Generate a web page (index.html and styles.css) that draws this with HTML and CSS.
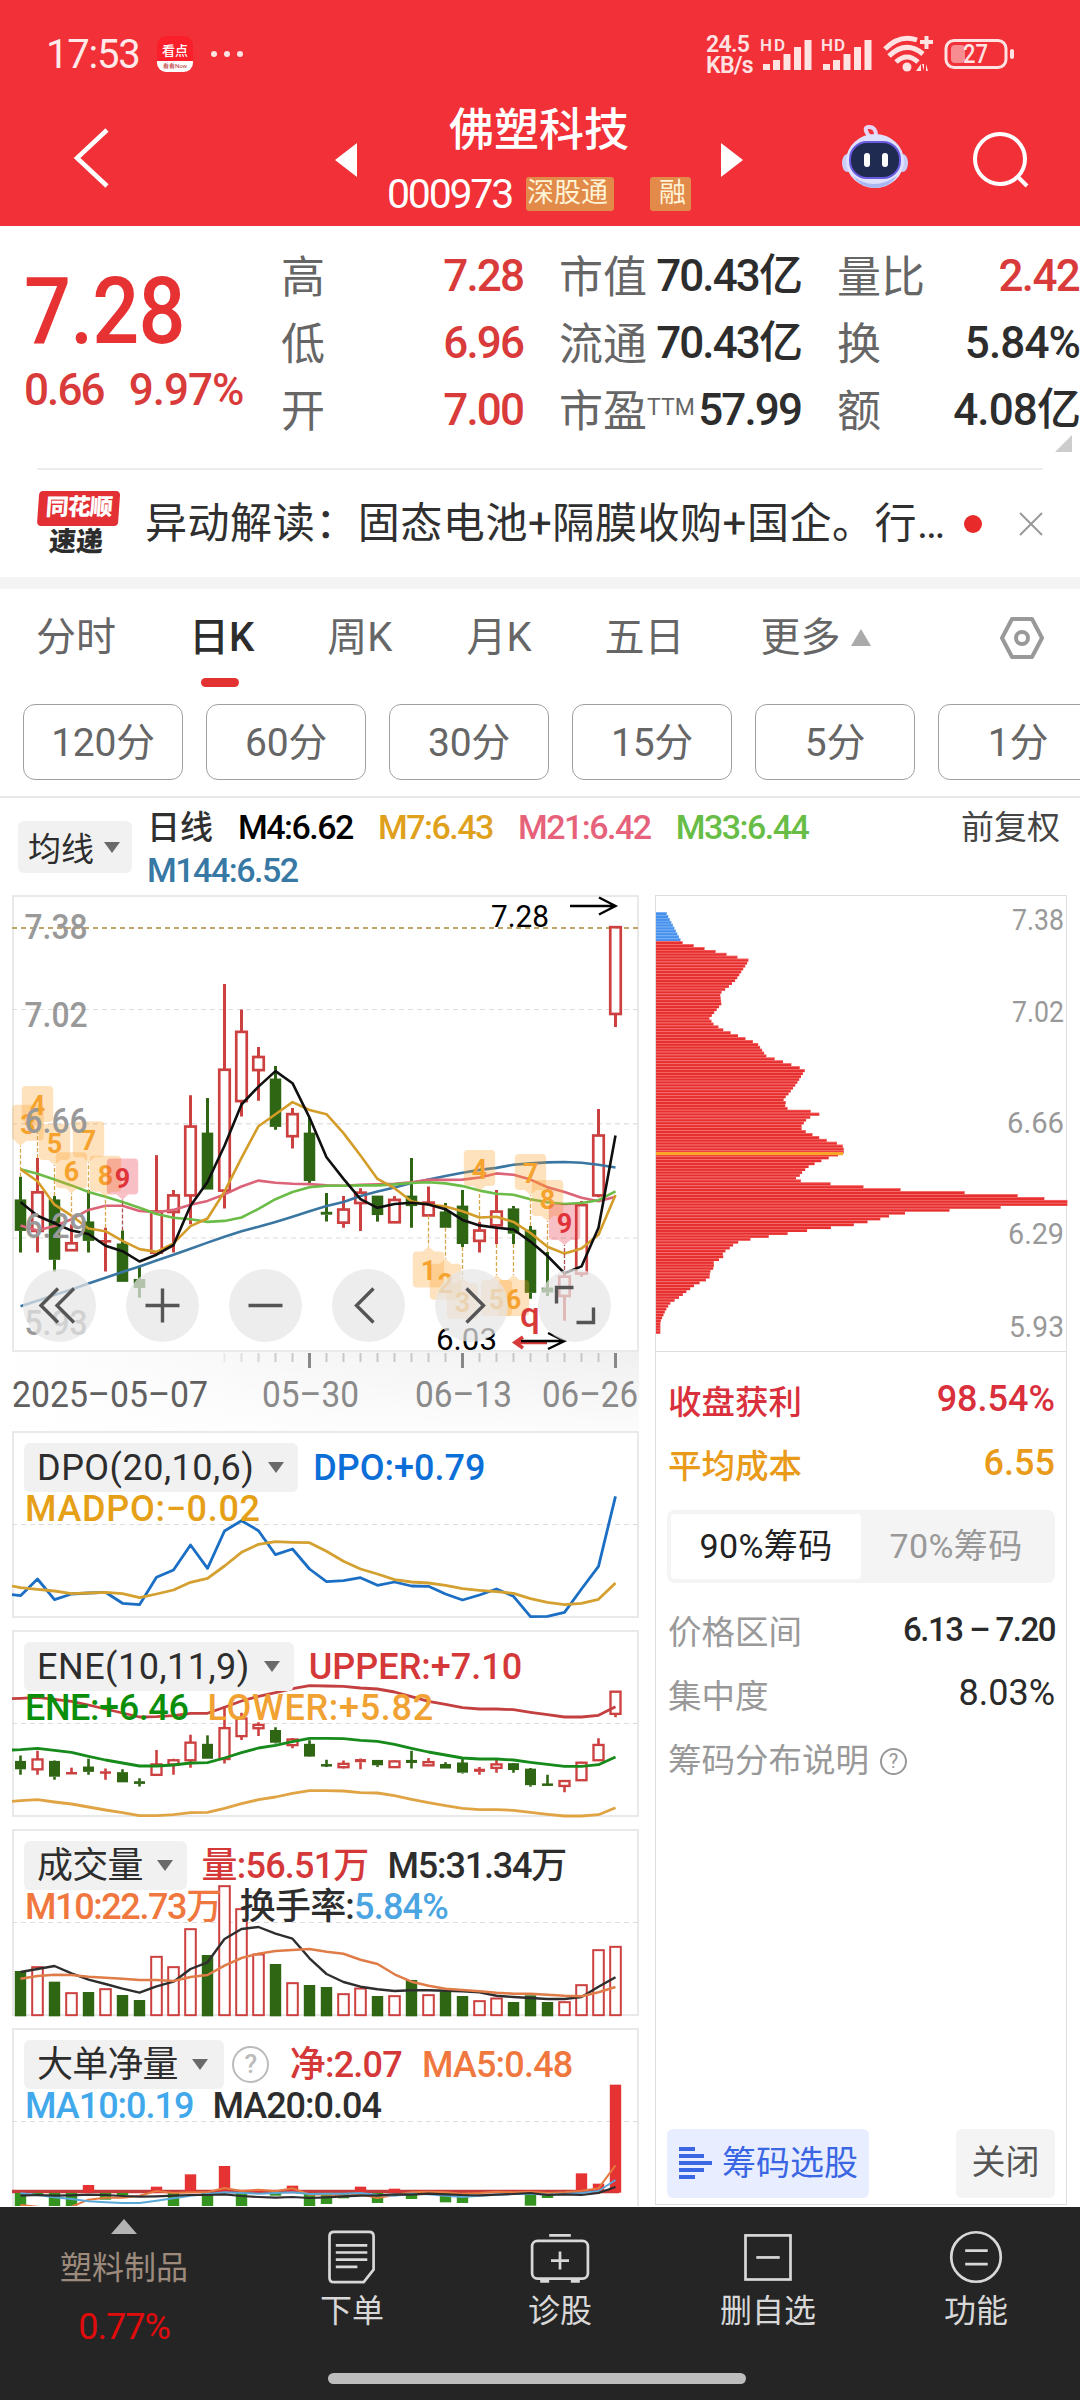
FILE: index.html
```html
<!DOCTYPE html>
<html lang="zh-CN">
<head>
<meta charset="utf-8">
<title>佛塑科技 000973</title>
<link rel="stylesheet" href="styles.css">
</head>
<body>
<div class="screen">
  <header class="top">
    <div class="status">
      <span class="clock">17:53</span>
      <span class="app"><b>看点</b><i>看看Now</i></span>
      <span class="dots"><i></i><i></i><i></i></span>
      <span class="speed">24.5<br>KB/s</span>
      <svg class="sys" viewBox="756 30 264 48" width="264" height="48">
        <g fill="#ffe3e3">
          <text x="760" y="51" font-size="17" font-weight="600" textLength="25">HD</text>
          <path d="M763 64h7v6h-7zM773 60h7v10h-7zM783.500 54h7v16h-7zM794 47h7v23h-7zM804.500 40h7v30h-7z"/>
          <text x="821" y="51" font-size="17" font-weight="600" textLength="24">HD</text>
          <path d="M823 64h7v6h-7zM833 60h7v10h-7zM843.500 54h7v16h-7zM854 47h7v23h-7zM864.500 40h7v30h-7z"/>
          <circle cx="907" cy="67" r="4.500"/>
          <path d="M916 71l5-7v7zM922 64h2v7zM926 64v7h2z"/>
        </g>
        <g fill="none" stroke="#ffe3e3" stroke-width="5">
          <path d="M885 49Q900 34 917 40"/><path d="M889 56Q906 40 923 54"/><path d="M896 62Q907 52 918 62"/>
          <path d="M920 42h13M926.500 36v13" stroke-width="4"/>
        </g>
        <rect x="946" y="40.500" width="60" height="27" rx="8" fill="none" stroke="#ffe3e3" stroke-width="3"/>
        <rect x="951" y="45" width="14" height="18" rx="4" fill="#f78d90"/>
        <rect x="1010" y="49" width="4" height="10" rx="2" fill="#ffe3e3"/>
        <text x="963" y="63" font-size="25" font-weight="500" fill="#ffe3e3" textLength="25" lengthAdjust="spacingAndGlyphs">27</text>
      </svg>
    </div>
    <div class="titlebar">
      <svg class="back" width="40" height="64" viewBox="0 0 40 64" fill="none" stroke="#fff" stroke-width="4.500"><path d="M36 4L6 32l30 28"/></svg>
      <svg class="prev" width="24" height="36" viewBox="0 0 24 36"><path d="M23 1v34L1 18z" fill="#fff"/></svg>
      <div class="name">
        <h1>佛塑科技</h1>
        <div class="code"><span>000973</span><em>深股通</em><em class="rong">融</em></div>
      </div>
      <svg class="next" width="24" height="36" viewBox="0 0 24 36"><path d="M1 1v34l22-17z" fill="#fff"/></svg>
      <svg class="robot" width="68" height="66" viewBox="0 0 68 66">
        <path d="M28 12Q22 4 27 3q9-1 8 12" fill="none" stroke="#e6d5f5" stroke-width="4" stroke-linecap="round"/>
        <ellipse cx="6" cy="39" rx="5" ry="9" fill="#c9cdf8"/><ellipse cx="62" cy="39" rx="5" ry="9" fill="#c9cdf8"/>
        <ellipse cx="34" cy="37" rx="29" ry="27" fill="#dfe0fb"/><path d="M12 52q20 16 44 0q-8 12-22 12t-22-12" fill="#a9b8f3"/>
        <rect x="9" y="18" width="50" height="36" rx="17" fill="#202b52" stroke="#6a5ae0" stroke-width="2"/>
        <rect x="23" y="29" width="6" height="14" rx="3" fill="#fff"/><rect x="41" y="29" width="6" height="14" rx="3" fill="#fff"/>
      </svg>
      <svg class="search" width="60" height="60" viewBox="0 0 60 60" fill="none" stroke="#fff" stroke-width="4"><circle cx="28" cy="29" r="25"/><path d="M45 46l10 10"/></svg>
    </div>
  </header>

  <section class="quote">
    <div class="price"><strong>7.28</strong><div class="chg"><span>0.66</span><span class="pct">9.97%</span></div></div>
    <dl class="c1"><div><dt>高</dt><dd class="up">7.28</dd></div><div><dt>低</dt><dd class="up">6.96</dd></div><div><dt>开</dt><dd class="up">7.00</dd></div></dl>
    <dl class="c2"><div><dt>市值</dt><dd>70.43亿</dd></div><div><dt>流通</dt><dd>70.43亿</dd></div><div><dt>市盈<sup>TTM</sup></dt><dd>57.99</dd></div></dl>
    <dl class="c3"><div><dt>量比</dt><dd class="up">2.42</dd></div><div><dt>换</dt><dd>5.84%</dd></div><div><dt>额</dt><dd>4.08亿</dd></div></dl>
    <i class="corner"></i>
  </section>

  <section class="news">
    <div class="brand"><b>同花顺</b><i>速递</i></div>
    <p>异动解读：固态电池+隔膜收购+国企。行…</p>
    <i class="dot"></i>
    <svg width="24" height="24" viewBox="0 0 24 24" stroke="#999" stroke-width="2"><path d="M1 1l22 22M23 1L1 23"/></svg>
  </section>

  <nav class="tabs">
    <span>分时</span><span class="on">日K</span><span>周K</span><span>月K</span><span>五日</span><span>更多<i></i></span>
    <svg width="46" height="46" viewBox="0 0 46 46" fill="none" stroke="#999" stroke-width="4" stroke-linejoin="round"><path d="M13 4h20l10 19-10 19H13L3 23z"/><circle cx="23" cy="23" r="6"/></svg>
  </nav>
  <div class="periods"><span>120分</span><span>60分</span><span>30分</span><span>15分</span><span>5分</span><span>1分</span></div>

  <div class="legend">
    <span class="chip">均线<i></i></span>
    <div class="mas"><b>日线</b><span class="k">M4:6.62</span><span class="y">M7:6.43</span><span class="p">M21:6.42</span><span class="g">M33:6.44</span><span class="b">M144:6.52</span></div>
    <span class="adj">前复权</span>
  </div>

  <main class="board">
    <div class="left">
      <svg class="kline" id="kline" width="627" height="457" viewBox="12 895 627 457"></svg>
      <svg class="axis" id="axis" width="639" height="79" viewBox="0 1352 639 79"></svg>
      <div class="panel">
        <svg id="dpo" width="627" height="187" viewBox="12 1432 627 187"></svg>
        <div class="row"><span class="chip en">DPO(20,10,6)<i></i></span><span class="blue wide">DPO:+0.79</span></div>
        <div class="row two"><span class="amber wider">MADPO:−0.02</span></div>
      </div>
      <div class="panel">
        <svg id="ene" width="627" height="187" viewBox="12 1631 627 187"></svg>
        <div class="row"><span class="chip en">ENE(10,11,9)<i></i></span><span class="red wide">UPPER:+7.10</span></div>
        <div class="row two"><span class="green ene">ENE:+6.46</span><span class="orange wider">LOWER:+5.82</span></div>
      </div>
      <div class="panel">
        <svg id="vol" width="627" height="187" viewBox="12 1830 627 187"></svg>
        <div class="row vol"><span class="chip">成交量<i></i></span><span class="red">量:56.51万</span><span class="dark v2">M5:31.34万</span></div>
        <div class="row two"><span class="coral m10">M10:22.73万</span><span class="dark">换手率:<span class="sky">5.84%</span></span></div>
      </div>
      <div class="panel last">
        <svg id="net" width="627" height="178" viewBox="12 2029 627 178"></svg>
        <div class="row net"><span class="chip">大单净量<i></i></span><span class="help">?</span><span class="red">净:2.07</span><span class="coral">MA5:0.48</span></div>
        <div class="row two net2"><span class="sky2">MA10:0.19</span><span class="dark">MA20:0.04</span></div>
      </div>
    </div>
    <aside class="right">
      <svg id="chips" width="410" height="455" viewBox="656 896 410 455"></svg>
      <div class="stats">
        <div class="s red"><span>收盘获利</span><b>98.54%</b></div>
        <div class="s avg"><span>平均成本</span><b>6.55</b></div>
        <div class="seg"><span class="on">90%筹码</span><span>70%筹码</span></div>
        <div class="s gray"><span>价格区间</span><b class="din">6.13 – 7.20</b></div>
        <div class="s gray"><span>集中度</span><b>8.03%</b></div>
        <div class="s gray"><span>筹码分布说明<i class="q">?</i></span></div>
      </div>
      <div class="acts">
        <span class="pick"><svg width="33" height="33" viewBox="0 0 33 33" stroke="#3b66e3" stroke-width="4"><path d="M0 2h16M0 9h25M0 16h33M0 23h25M0 30h16"/></svg>筹码选股</span>
        <span class="close">关闭</span>
      </div>
    </aside>
  </main>

  <footer class="nav">
    <div class="sector"><i></i><span>塑料制品</span><b>0.77%</b></div>
    <div class="item"><svg width="60" height="60" viewBox="0 0 60 60"><path d="M10 2h39q5 0 5 5v37L43 58H10q-5 0-5-5V7q0-5 5-5z"/><path d="M12 17h35M12 25h35M12 33h35M12 41h24"/></svg>下单</div>
    <div class="item"><svg width="60" height="60" viewBox="0 0 60 60"><rect x="-1" y="12" width="62" height="42" rx="6"/><path d="M18 6h24M30 24v20M20 34h20M8 57h10M42 57h10"/></svg>诊股</div>
    <div class="item"><svg width="60" height="60" viewBox="0 0 60 60"><rect x="5" y="6" width="50" height="49"/><path d="M17 30.500h26"/></svg>删自选</div>
    <div class="item"><svg width="60" height="60" viewBox="0 0 60 60"><circle cx="30" cy="30" r="27.500"/><path d="M18 23h25M18 38h25"/></svg>功能</div>
    <i class="home"></i>
  </footer>
</div>
<script src="charts.js"></script>
</body>
</html>
```
FILE: styles.css
```css
* { box-sizing: border-box; margin: 0; padding: 0; }
body { width: 1080px; background: #fff; font-family: Roboto, "Noto Sans CJK SC", sans-serif; color: #303030; }
i, em { font-style: normal; }
svg { display: block; flex: none; overflow: visible; }
svg text { font-family: Roboto, "Noto Sans CJK SC", sans-serif; }
.screen { width: 1080px; height: 2400px; overflow: hidden; display: flex; flex-direction: column; }
.screen > * { flex: none; }

/* header */
.top { height: 226px; background: #f13038; color: #fff; }
.status { height: 94px; padding: 30px 60px 0 46px; display: flex; align-items: flex-start; }
.clock { width: 111px; font-size: 40px; line-height: 49px; letter-spacing: -1.200px; color: #ffe9e9; }
.app { width: 36px; height: 36px; margin-top: 6px; border-radius: 9px; background: #fb1f2b; overflow: hidden; text-align: center; }
.app b { display: block; height: 25px; font-size: 13px; line-height: 30px; font-weight: 500; }
.app i { display: block; height: 11px; background: #fff; color: #b33; font-size: 6px; line-height: 10px; }
.dots { display: flex; gap: 7px; margin: 21px 0 0 18px; flex: 1; }
.dots i { width: 6px; height: 6px; border-radius: 3px; background: #ffe3e3; }
.speed { width: 50px; margin-top: 5px; font-size: 23px; line-height: 20.500px; font-weight: 600; letter-spacing: -.7px; color: #ffe3e3; }
.titlebar { height: 132px; display: flex; padding-left: 71px; }
.back { margin-top: 32px; }
.prev { margin: 48px 0 0 223px; }
.name { width: 362px; display: flex; flex-direction: column; align-items: center; }
h1 { margin-top: 7px; font-size: 45px; line-height: 60px; font-weight: 500; }
.code { display: flex; align-items: center; height: 36px; margin-top: 15px; font-size: 27px; color: #fff3d6; }
.code span { color: #fff; font-size: 41px; letter-spacing: -2.200px; margin-right: 14px; }
.code em { width: 88px; height: 34px; padding-left: 1px; line-height: 33px; border-radius: 3px; background: #e28a4a; }
.code .rong { width: 41px; margin-left: 36px; padding-left: 9px; white-space: nowrap; }
.next { margin: 48px 0 0; }
.robot { margin: 30px 0 0 97px; }
.search { margin: 36px 0 0 63px; }

/* quote */
.quote { position: relative; height: 242px; display: grid; grid-template-columns: 281px 242px 36px 242px 36px 243px; }
.price { padding: 32px 0 0 24px; color: #e63232; }
.price strong { display: block; font-size: 93px; line-height: 108px; font-weight: 500; letter-spacing: -1px; transform: scaleX(.89); transform-origin: 0 0; }
.chg { display: flex; gap: 25px; font-size: 44px; line-height: 48px; letter-spacing: -1.900px; color: #d93a3a; font-weight: 500; }
.pct { letter-spacing: -1px; }
dl { padding-top: 17px; }
.c2 { grid-column: 4; } .c3 { grid-column: 6; }
dl div { height: 67px; display: flex; justify-content: space-between; align-items: center; white-space: nowrap; }
dt { font-size: 44px; line-height: 67px; color: #666; padding-top: 3px; }
dd { font-size: 44px; line-height: 67px; letter-spacing: -1.900px; font-weight: 500; color: #2d2d2d; }
dd.up { color: #d93a3a; }
.c3 dd { letter-spacing: -.9px; }
.c3 .up { letter-spacing: -1.700px; padding-right: 1px; }
sup { font-size: 23px; line-height: 0; vertical-align: 12px; }
.corner { position: absolute; right: 8px; top: 209px; border: solid transparent; border-width: 0 0 17px 17px; border-bottom-color: #ccc; }

/* news */
.news { height: 109px; margin: 0 37px; border-top: 2px solid #ececec; display: flex; align-items: center; }
.brand { width: 81px; height: 66px; margin-right: 27px; text-align: center; transform: skewX(-4deg); }
.brand b { display: block; height: 35px; border-radius: 4px; background: #e33035; color: #fff; font-size: 23px; line-height: 34px; font-weight: 900; letter-spacing: -1px; }
.brand i { display: block; font-size: 27px; line-height: 33px; font-weight: 900; color: #2d2d2d; }
.news p { width: 807px; font-size: 42px; line-height: 60px; letter-spacing: .55px; white-space: nowrap; }
.dot { width: 18px; height: 18px; border-radius: 9px; background: #e82a2a; margin: 0 37px 0 12px; }

/* tabs */
.tabs { height: 127px; border-top: 12px solid #f4f4f4; display: flex; padding: 19px 35px 0 36px; font-size: 40px; line-height: 60px; color: #666; }
.tabs span { height: 83px; margin-right: 73px; }
.tabs span:nth-child(2) { margin-right: 73px; }
.tabs span:nth-child(3) { margin-right: 74px; }
.tabs span:nth-child(4) { margin-right: 73px; }
.tabs span:nth-child(5) { margin-right: 76px; }
.tabs .on { color: #2d2d2d; font-weight: 500; position: relative; }
.tabs .on::after { content: ""; position: absolute; left: 12px; top: 70px; width: 38px; height: 9px; border-radius: 5px; background: #e33232; }
.tabs span:nth-child(6) { display: flex; margin-right: auto; }
.tabs span i { height: 0; margin: 21px 0 0 10px; border: solid transparent; border-width: 0 10px 17px; border-bottom-color: #aaa; }
.tabs svg { margin: 7px 0 0; }
.periods { height: 94px; border-bottom: 2px solid #e8e8e8; padding-left: 23px; display: flex; gap: 23px; overflow: hidden; }
.periods span { flex: none; width: 160px; height: 76px; padding-top: 2px; border: 1.500px solid #a0a0a0; border-radius: 12px; font-size: 39px; line-height: 73px; text-align: center; color: #666; letter-spacing: -.3px; }

/* moving-average legend */
.legend { height: 97px; display: flex; align-items: flex-start; padding: 0 20px 0 18px; }
.chip { display: inline-flex; align-items: center; background: #f1f1f1; border-radius: 6px; color: #2d2d2d; white-space: nowrap; }
.chip i { border: solid transparent; border-width: 11px 8.500px 0; border-top-color: #6a6a6a; }
.legend .chip { width: 114px; height: 52px; margin-top: 23px; padding-left: 10px; font-size: 33px; gap: 10px; }
.mas { width: 700px; margin: 8px 0 0 15px; display: flex; flex-wrap: wrap; column-gap: 25px; font-size: 34px; line-height: 43px; letter-spacing: -1.500px; font-weight: 500; }
.mas b { font-size: 33px; font-weight: 500; letter-spacing: 0; }
.k { color: #000; } .y { color: #dfa01c; } .p { color: #e6627a; } .g { color: #67bd45; } .b { color: #3878a4; }
.adj { margin: 8px 0 0 auto; font-size: 33px; line-height: 43px; color: #444; }

/* charts */
.board { height: 1312px; display: flex; gap: 16px; }
.left { width: 639px; display: flex; flex-direction: column; }
.kline { margin-left: 12px; }
.panel { position: relative; height: 187px; margin: 0 0 12px 12px; padding: 12px 0 0 12px; }
.panel > svg { position: absolute; left: 0; top: 0; }
.last { height: 178px; margin-bottom: 0; }
.last > svg { overflow: hidden; }
.row { position: relative; display: flex; align-items: center; height: 49px; font-size: 36px; line-height: 40px; letter-spacing: -.8px; font-weight: 500; white-space: nowrap; gap: 15px; }
.row .chip { height: 49px; padding: 0 14px 0 13px; gap: 14px; font-weight: 400; }
.row .en { letter-spacing: .5px; }
.row.two { height: 40px; padding: 0 0 6px 1px; gap: 19px; }
.wide { letter-spacing: 0; }
.wider { letter-spacing: .7px; }
.ene { letter-spacing: -.4px; }
.m10 { letter-spacing: -1.400px; }
.vol .v2 { margin-left: 4px; letter-spacing: -1.200px; }
.net .chip { padding-right: 16px; }
.net .red { margin-left: 6px; }
.net .coral { margin-left: 5px; }
.net2 { letter-spacing: -1px; }
.blue { color: #0c6fd8; } .amber { color: #e5a018; } .red { color: #d43838; } .green { color: #0b8f0b; }
.orange { color: #f0a233; } .dark { color: #2d2d2d; } .coral { color: #f0783f; } .sky { color: #4aa5e2; } .sky2 { color: #42a8ec; }
.help { width: 37px; height: 37px; margin-left: -7px; border: 2.500px solid #bbb; border-radius: 50%; text-align: center; line-height: 32px; font-size: 26px; color: #bbb; }

.right { width: 412px; height: 1310px; border: 1px solid #dedede; display: flex; flex-direction: column; }
.stats { border-top: 1px solid #dedede; padding: 15px 11px 0; }
.s { height: 64px; display: flex; justify-content: space-between; align-items: center; padding: 0 0 0 1px; font-size: 33.500px; }
.s b { font-weight: 400; font-size: 36px; color: #2a2a2a; }
.s .din { font-size: 33px; letter-spacing: -1.500px; font-weight: 500; }
.s.red, .s.red b { color: #d9303c; font-weight: 500; }
.s.avg, .s.avg b { color: #e89a18; font-weight: 500; }
.s.gray span { color: #999; }
.seg { height: 73px; margin: 15px 0 14px; padding: 4px; border-radius: 8px; background: #f4f4f4; display: flex; font-size: 34px; line-height: 64px; color: #999; text-align: center; letter-spacing: .4px; }
.seg span { width: 190px; border-radius: 4px; }
.seg .on { background: #fff; color: #222; }
.q { display: inline-block; width: 27px; height: 27px; margin-left: 11px; border: 2px solid #999; border-radius: 50%; font-size: 20px; line-height: 23px; text-align: center; vertical-align: 4px; }
.acts { margin-top: auto; padding: 0 11px 6px; display: flex; justify-content: space-between; font-size: 34px; line-height: 67px; }
.pick { width: 202px; height: 69px; display: flex; align-items: center; gap: 10px; padding-left: 12px; border-radius: 6px; background: #e8eeff; color: #3b66e3; white-space: nowrap; }
.close { width: 99px; border-radius: 6px; background: #f4f4f4; text-align: center; color: #555; }

/* bottom bar */
.nav { position: relative; height: 193px; background: #252525; display: flex; color: #d8d8d8; font-size: 32px; line-height: 48px; padding-left: 20px; }
.sector { width: 208px; display: flex; flex-direction: column; align-items: center; color: #9c8b7d; }
.sector i { margin: 12px 0 10px; border: solid transparent; border-width: 0 13px 15px; border-bottom-color: #b4b4b4; }
.sector b { margin-top: 11px; font-weight: 400; font-size: 36px; letter-spacing: -1px; color: #e00c0c; }
.item { width: 208px; display: flex; flex-direction: column; align-items: center; padding-top: 20px; }
.item:nth-child(2) { margin-left: 20px; }
.item svg { fill: none; stroke: #d8d8d8; stroke-width: 3; transform: scale(.9); }
.home { position: absolute; left: 328px; top: 166px; width: 418px; height: 11px; border-radius: 6px; background: #bdbdbd; }
```
FILE: charts.js
```js
const RED = '#cc4040', GREEN = '#2f6614';
const X = i => 20.5 + 17 * i;
const el = id => document.getElementById(id);
const line = (ys, f, color, w = 2.6, start) =>
  `<polyline fill="none" stroke="${color}" stroke-width="${w}" stroke-linejoin="round" points="${start === undefined ? '' : '12,' + f(start) + ' '}${ys.map((v, i) => X(i) + ',' + f(v).toFixed(1)).join(' ')}"/>`;
const dash = (y, c = '#dcdcdc', w = 1, x2 = 639) =>
  `<path d="M12 ${y}H${x2}" stroke="${c}" stroke-width="${w}" stroke-dasharray="5 4"/>`;
const frame = (y, h) => `<rect x="13" y="${y + 1}" width="625" height="${h - 2}" fill="none" stroke="#e9e9e9" stroke-width="2"/>`;
const text = (x, y, s, size, w, color, extra = '') =>
  `<text x="${x}" y="${y}" font-size="${size}" fill="${color}" textLength="${w}" lengthAdjust="spacingAndGlyphs" ${extra}>${s}</text>`;

// direction (1 up, 0 down), high, body top, body bottom, low
const K = [[0,862,929,1019,1082],[1,807,907,1019,1082],[0,918,929,1103,1137],[1,1000,1055,1075,1075],[0,900,993,1048,1082],[1,1010,1047,1050,1137],
[0,1018,1057,1167,1167],[0,1120,1160,1185,1213],[1,799,963,1082,1082],[1,900,916,964,1082],[1,625,716,916,1000],[0,633,735,899,899],
[1,302,551,902,954],[1,376,441,642,687],[1,485,514,552,641],[0,540,578,717,725],[1,662,680,744,780],[0,690,735,874,880],
[0,909,965,972,992],[1,918,957,995,1010],[1,895,908,938,1019],[0,918,918,973,992],[1,918,929,994,994],[0,807,918,947,1010],
[1,890,937,974,974],[0,938,964,1010,1010],[0,900,947,1057,1066],[1,993,1018,1048,1082],[1,900,963,1003,1057],[0,947,955,1027,1057],
[0,1005,1017,1199,1216],[0,1080,1185,1198,1208],[1,1140,1152,1208,1280],[1,932,944,1143,1152],[1,665,742,916,921],[1,137,137,389,427]];
const candles = (f, w, sw) => K.map(([up, h, t, b, l], i) => {
  const x = X(i), T = f(t), B = f(b), c = up ? RED : GREEN;
  let s = `<path d="M${x} ${f(h)}V${T}M${x} ${B}V${f(l)}" stroke="${c}" stroke-width="${sw}"/>`;
  if (up && B - T > 3) s += `<rect x="${x - w / 2 + .5}" y="${T}" width="${w - 1}" height="${B - T}" fill="#fff" fill-opacity=".6" stroke="${c}" stroke-width="${sw * .9}"/>`;
  else s += `<rect x="${x - w / 2}" y="${T - .5}" width="${w}" height="${Math.max(B - T + .5, 2.5)}" fill="${c}"/>`;
  return s;
}).join('');

// price chart
const Y = v => 880 + v / 2.904;
const M4 = [935,975,997,1018,1028,1062,1078,1108,1088,1060,946,877,772,652,600,555,590,690,805,868,927,952,941,937,942,956,987,1003,1010,1015,1050,1092,1142,1122,1010,742];
const M7 = [840,875,943,975,1012,1020,1048,1072,1080,1055,1005,983,905,807,715,680,645,668,680,735,800,868,895,933,943,948,962,980,978,993,1025,1065,1085,1070,1030,915];
const M21 = [1003,1018,1005,985,958,946,946,961,965,958,943,932,913,890,873,879,882,883,887,888,885,884,882,878,871,871,870,864,852,856,870,892,906,923,933,920];
const M33 = [840,853,870,887,906,920,935,952,970,981,985,993,990,980,955,927,906,892,888,888,887,887,884,880,878,881,889,902,911,914,927,936,941,938,930,904];
const M144 = [1238,1222,1205,1189,1172,1155,1138,1122,1105,1088,1071,1053,1036,1020,1007,993,978,962,947,935,918,905,893,880,870,860,850,842,836,827,823,820,819,821,827,835];
// index, digit, anchor value, below the candle?, horizontal shift
const tags = [[0,3,862,0,7.5],[1,4,807,0],[2,5,918,0],[3,6,1000,0],[4,7,910,0],[5,8,1010,0],[6,9,1018,0],[24,1,974,1],[25,2,1010,1],[26,3,1066,1],
[28,5,1057,1],[29,6,1057,1],[27,4,993,0],[30,7,1005,0],[31,8,1080,0],[32,9,1150,0]];
const tag = ([i, n, v, below, dx = 0]) => {
  const x = X(i), cx = x + dx, hot = n === 9, s = below ? 1 : -1, tip = Y(v) + s * 31, y = below ? tip + 5 : tip - 41;
  return `<path d="M${x} ${Y(v)}V${tip}" stroke="${hot ? '#b05050' : '#d8a850'}" stroke-width="1.3" stroke-dasharray="4 2"/>
  <g fill="${hot ? '#e8303c' : '#fda028'}" ><rect x="${cx - 15.7}" y="${y}" width="31.400" height="36" rx="4" fill-opacity=".3"/>
  <path d="M${x - 6} ${tip + s * 5}h12L${x} ${tip}z" fill-opacity=".3"/></g>
  <text x="${cx}" y="${y + 29}" text-anchor="middle" font-size="27" font-weight="700" fill="${hot ? '#e03238' : '#f6a22e'}">${n}</text>`;
};
const icons = ['M49 0l-17 17 17 17M65 0l-17 17 17 17', 'M0 17h34M17 0v34', 'M0 17h34', 'M26 0L9 17l17 17', 'M8 0l17 17L8 34', 'M-1 15V-1h17M36 19v15H19'];
const offs = [-50.5, -17, -17, -21, -13, -17];
el('kline').innerHTML = frame(895, 457) + dash(928, '#c0a46c', 2) + dash(1009.5) + dash(1123.8, '#e2e2e2', 1.5) + dash(1238) +
  candles(Y, 11.5, 3) +
  line(M144, Y, '#3a76a2') + line(M21, Y, '#dc6478') + line(M33, Y, '#6cbc48') + line(M7, Y, '#d49c28') + line(M4, Y, '#101010') +
  tags.map(tag).join('') +
  [['7.38', 938.5], ['7.02', 1026.5], ['6.66', 1132.5], ['6.29', 1237.5], ['5.93', 1334.5]].map(([s, y]) => text(24.5, y, s, 35, 63, '#999', 'font-weight="500"')).join('') +
  text(491, 926.5, '7.28', 32, 58, '#000') + '<path d="M570 906h45M599 897.500l16.500 8.500-16.500 8.500" fill="none" stroke="#000" stroke-width="2.400"/>' +
  text(436, 1349.5, '6.03', 32, 61, '#000') +
  '<path d="M547 1342.500h-32M523 1337l-8 5.500 8 5.500" fill="none" stroke="#d83a3a" stroke-width="3.500"/><path d="M521 1341h43M548 1333l16.500 8-16.500 8" fill="none" stroke="#000" stroke-width="2.400"/>' +
  '<text x="520" y="1327" font-size="35" fill="#d83a3a" font-weight="500">q</text>' +
  icons.map((d, i) => { const cx = 59.5 + 103 * i; return `<circle cx="${cx}" cy="1305.500" r="36.500" fill="#e6e6e6" fill-opacity=".72"/><path transform="translate(${cx + offs[i]} 1288.500)" d="${d}" fill="none" stroke="#555" stroke-width="3.400"/>`; }).join('');

// date axis
let ticks = '';
for (let i = 12; i < 36; i++) {
  const big = i === 17 || i === 26 || i === 35;
  ticks += `<path d="M${X(i)} 1353v${big ? 15 : 9}" stroke="${big ? '#888' : '#c8c8c8'}" stroke-width="${big ? 3 : 2}" opacity="${Math.min(1, .3 + (i - 12) * .2)}"/>`;
}
el('axis').innerHTML = '<defs><linearGradient id="gx"><stop offset="0" stop-color="#fff"/><stop offset=".5" stop-color="#f6f6f6"/><stop offset="1" stop-color="#f0f0f0"/></linearGradient><linearGradient id="gy" x2="0" y2="1"><stop offset="0" stop-color="#fff" stop-opacity="0"/><stop offset="1" stop-color="#fff" stop-opacity=".8"/></linearGradient></defs><rect y="1352" width="639" height="79" fill="url(#gx)"/><rect y="1352" width="639" height="79" fill="url(#gy)"/>' + ticks +
  text(12, 1407, '2025–05–07', 36.5, 196, '#606060') + text(262, 1407, '05–30', 36.5, 97, '#8a8a8a') + text(415, 1407, '06–13', 36.5, 97, '#8a8a8a') + text(542, 1407, '06–26', 36.5, 96, '#8a8a8a');

// DPO
const D = v => 1360 + v / 3;
el('dpo').innerHTML = frame(1432, 187) + dash(1525.5) +
  line([710,660,722,705,702,700,733,737,655,633,558,628,516,485,515,587,570,630,668,665,656,679,669,681,682,705,723,708,690,712,773,772,760,690,622,412], D, '#1a6ec4', 2.8, 707) +
  line([686,691,696,704,702,700,704,716,705,693,670,658,621,580,556,548,550,551,577,607,630,645,662,669,672,679,689,694,698,703,719,730,737,733,721,672], D, '#d4a030', 2.8, 681);

// ENE
const E = v => 1620 + v / 3, EK = v => 1692.7 + (v - 137) * .088;
el('ene').innerHTML = frame(1631, 187) + dash(1724.5) + candles(EK, 11, 2.6) +
  line([238,235,241,247,258,270,282,294,293,290,283,283,265,246,232,221,209,200,201,202,207,210,219,233,247,256,266,270,270,272,280,287,294,294,289,263], E, '#c44040', 2.8, 239) +
  line([392,388,394,400,412,423,432,441,441,438,432,431,417,401,387,379,368,358,358,359,364,367,376,388,399,408,417,420,420,423,430,436,442,442,437,414], E, '#178a1c', 2.8, 393) +
  line([545,542,549,555,564,573,581,590,590,587,581,580,568,554,542,534,523,515,515,516,521,522,530,541,551,560,568,572,572,574,580,586,591,591,587,566], E, '#e0a444', 2.8, 547);

// volume
const V = v => 1820 + v / 3;
const vol = [456,443,488,521,519,509,528,543,412,443,329,408,200,269,405,435,491,498,504,524,507,531,530,483,527,517,531,545,537,549,529,549,548,497,392,382];
el('vol').innerHTML = frame(1830, 187) + dash(1923.5) +
  vol.map((v, i) => K[i][0]
    ? `<rect x="${X(i) - 5.3}" y="${V(v) + .5}" width="10.600" height="${V(590) - V(v) - 1}" fill="#fff" stroke="${RED}" stroke-width="2"/>`
    : `<rect x="${X(i) - 5.7}" y="${V(v)}" width="11.400" height="${V(592) - V(v)}" fill="${GREEN}"/>`).join('') +
  line([459,450,441,463,482,495,509,521,502,488,450,430,360,330,324,344,359,418,465,489,503,511,516,514,514,515,517,520,530,534,537,540,540,534,503,475], V, '#2e2e2e', 2.4) +
  line([479,471,467,468,473,476,479,483,483,486,474,468,440,417,404,396,393,390,398,404,422,435,466,488,500,509,513,517,521,524,524,527,530,532,520,504], V, '#e07c48', 2.5);

// large-order net volume
const net = { 0:1180,1:1130,2:1180,3:1180,4:1098,5:1142,6:1128,8:1103,9:1180,10:1066,11:1180,12:1041,13:1180,14:1111,15:1130,16:1100,17:1180,18:1155,19:1138,20:1103,21:1152,22:1109,23:1140,25:1150,26:1152,30:1160,31:1137,33:1063,34:1094,35:797 };
el('net').innerHTML = frame(2029, 220) + dash(2122.5) +
  '<path d="M12 2192.500H619" stroke="#c43c3c" stroke-width="3.500"/>' +
  Object.entries(net).map(([i, v]) => v < 1118
    ? `<rect x="${X(+i) - 5.7}" y="${V(v)}" width="11.400" height="${V(1121) - V(v)}" fill="#e53232"/>`
    : `<rect x="${X(+i) - 5.7}" y="${V(1122)}" width="11.400" height="${V(v) - V(1122)}" fill="#35941f"/>`).join('') +
  line([1158,1163,1170,1163,1142,1136,1136,1130,1116,1122,1120,1120,1107,1116,1112,1117,1108,1127,1126,1130,1126,1137,1128,1120,1118,1120,1124,1122,1118,1120,1118,1122,1120,1115,1108,1039], V, '#e67840', 2) +
  line([1123,1128,1135,1140,1147,1150,1152,1152,1145,1138,1130,1125,1120,1122,1124,1122,1120,1125,1124,1124,1122,1128,1130,1124,1126,1130,1134,1130,1127,1125,1124,1127,1125,1122,1116,1083], V, '#5aa8d8', 2) +
  line([1130,1128,1130,1129,1127,1128,1131,1133,1132,1130,1128,1128,1126,1131,1134,1136,1134,1137,1135,1132,1130,1129,1126,1127,1124,1126,1128,1129,1127,1125,1122,1128,1126,1128,1122,1104], V, '#2e2e2e', 2.2);

// cost distribution: outline points, interpolated row by row
const P = [[97,78],[183,123],[188,127],[241,327],[300,287],[318,268],[340,240],[372,244],[415,208],[432,220],[450,250],[490,352],[528,378],[535,398],[569,496],[610,470],[640,447],[658,430],[672,440],[682,430],[690,461],[696,538],[703,538],[708,516],[718,500],[742,481],[752,490],[780,555],[787,585],[800,611],[820,611],[830,575],[847,532],[860,505],[875,488],[890,476],[899,460],[907,502],[916,628],[924,700],[933,836],[942,1078],[951,1180],[960,1245],[964,1282],[974,1282],[978,1145],[987,992],[995,844],[1003,750],[1013,744],[1021,693],[1030,671],[1039,605],[1047,536],[1055,474],[1064,420],[1073,358],[1082,306],[1090,285],[1105,268],[1118,248],[1134,250],[1142,228],[1150,218],[1160,224],[1175,210],[1195,208],[1205,186],[1215,165],[1230,145],[1250,120],[1270,90],[1290,77],[1325,61],[1366,61]];
let rows = '';
const step = 8.72;
for (let n = 0; 101 + n * step < 1363; n++) {
  const y = 101 + n * step, k = P.findIndex(p => p[0] > y), [y0, a] = P[k - 1], [y1, b] = P[k];
  const w = (a + (b - a) * (y - y0) / (y1 - y0) - 48) / 3, top = 880 + (y - step / 2) / 3, blue = y < 184;
  rows += `<rect x="656" y="${top.toFixed(2)}" width="${w.toFixed(1)}" height="2.95" fill="${blue ? '#4791ec' : '#e63030'}"/><rect x="656" y="${top.toFixed(2)}" width="${w.toFixed(1)}" height=".7" fill="${blue ? '#7db4f6' : '#fa7474'}"/>`;
}
el('chips').innerHTML = rows + '<rect x="656" y="1152" width="187" height="3.200" fill="#fba52c"/>' +
  [['7.38', 930, 52], ['7.02', 1022, 52], ['6.66', 1133, 57], ['6.29', 1244, 56], ['5.93', 1337, 55]].map(([s, y, w]) => text(1064 - w, y, s, 29.5, w, '#999')).join('');
```
